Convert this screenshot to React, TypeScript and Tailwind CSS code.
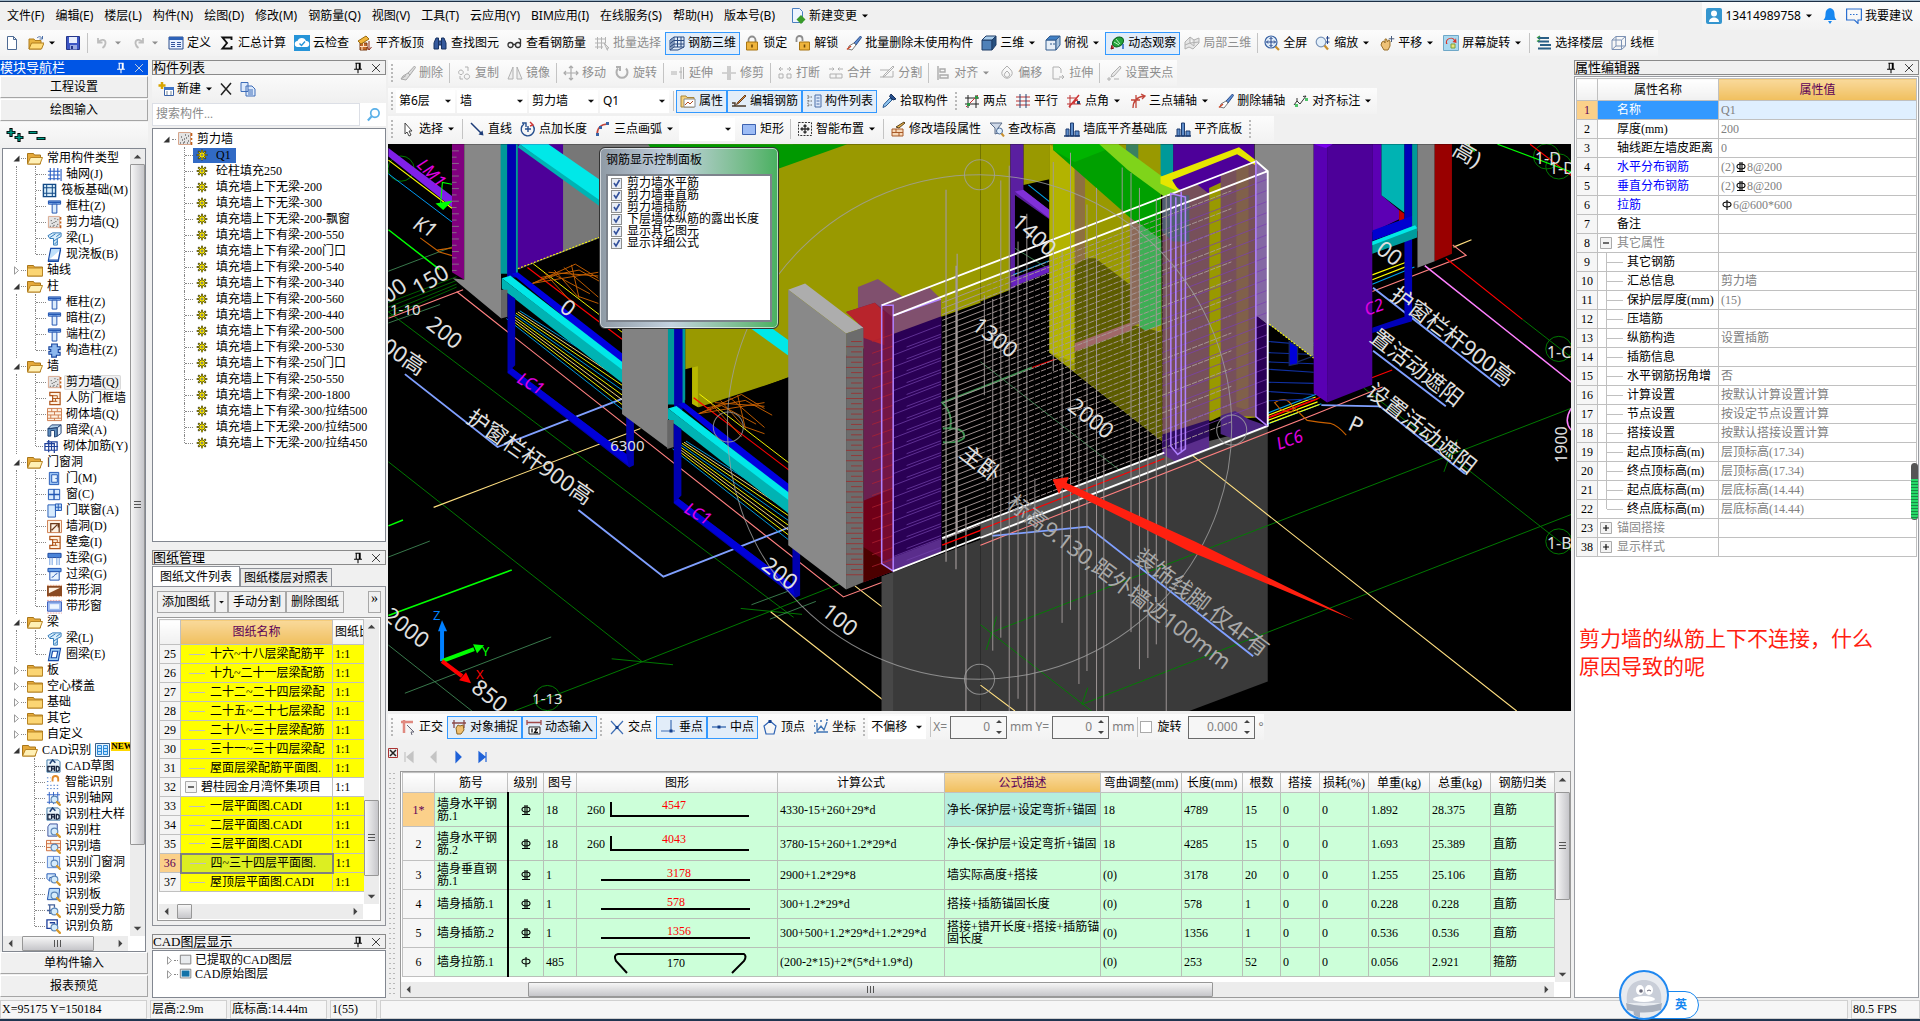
import type { ReactNode } from "react";
import clsx from "clsx";

/* ---------- icons, all on a 16 x 16 grid ---------- */

const lens = (
  <g>
    <circle cx="9" cy="9" r="3.6" fill="#d6ecfb" stroke="#5b86b8" strokeWidth="1.2" />
    <path d="M11.8 11.8l3 3" stroke="#d99a2b" strokeWidth="2.4" strokeLinecap="round" />
  </g>
);

const cadBadge = (
  <g>
    <path d="M1 1h12l2 2v11H1z" fill="#eaf4fb" stroke="#3b78a8" />
    <path d="M4 5l3-4 3 3" fill="none" stroke="#1d3f73" strokeWidth="1.6" />
    <path d="M5 8H2v5h3M6 13V8h3v5M6 10.5h3M11 8v5h1.5l1.5-1V9l-1.5-1z" fill="none" stroke="#14213d" strokeWidth="1.4" />
  </g>
);

const icons: Record<string, ReactNode> = {
  page: <path d="M3.5 1.5h6l3 3v10h-9z M9.5 1.5v3h3" fill="#fff" stroke="#4d6a94" />,
  open: (
    <g>
      <path d="M1 4h5l1 1.5h6V14H1z" fill="#e9b440" stroke="#b07d1c" />
      <path d="M3.5 8H16l-2.5 6H1z" fill="#ffdc7a" stroke="#b07d1c" />
      <path d="M9 3c2-2 4-1.5 5 .5M14.5 1v3h-3" fill="none" stroke="#4a6ea8" />
    </g>
  ),
  save: (
    <g>
      <path d="M1.5 1.5h13v13h-13z" fill="#3c55c4" stroke="#25368a" />
      <path d="M4 2h8v6H4z" fill="#e9eefc" />
      <path d="M5 10h7v4.5H5z" fill="#9aa9e2" />
      <path d="M6 11h2v3H6z" fill="#25368a" />
    </g>
  ),
  undo: <path d="M4 3v4.5h4.5M4.5 7C7 3.5 12 4.5 11.5 8.5 11.2 10.5 10 12 8.5 13" fill="none" stroke="#bdbdbd" strokeWidth="1.8" />,
  redo: <path d="M12 3v4.5H7.5M11.5 7C9 3.5 4 4.5 4.5 8.5 4.8 10.5 6 12 7.5 13" fill="none" stroke="#bdbdbd" strokeWidth="1.8" />,
  define: (
    <g>
      <path d="M1 2h14v12H1z" fill="#eaf2ff" stroke="#2b4c8c" />
      <path d="M1 2h14v3H1z" fill="#2e62b8" />
      <path d="M3 7.5h4M3 9.5h4M3 11.5h4M9 7.5h4M9 9.5h4M9 11.5h4" stroke="#33539b" />
    </g>
  ),
  sigma: <path d="M12.5 5V2.5h-9L8 8l-4.5 5.5h9V11" fill="none" stroke="#111" strokeWidth="1.9" />,
  cloud: (
    <g>
      <path d="M0 0h16v16H0z" fill="#2694d8" />
      <path d="M4 12a3 3 0 01-.5-6A4.5 4.5 0 0112 6a3 3 0 01.5 6z" fill="#fff" />
      <path d="M5.5 8.5l2 2 3.5-4" fill="none" stroke="#2694d8" strokeWidth="1.4" />
    </g>
  ),
  flush: (
    <g>
      <path d="M3 15V8h7v7z" fill="#c26a2c" stroke="#7a3d14" />
      <path d="M3 11.5h7M6.5 8v3.5M5 11.5V15" stroke="#ffe0c0" />
      <path d="M1 6l8-5 3 3-8 5z" fill="#f1b53a" stroke="#9a6a10" />
      <path d="M12 6v8M10 12l2 3 2.5-3" fill="none" stroke="#8b2a12" />
    </g>
  ),
  binoc: (
    <g fill="#35599c" stroke="#17305f">
      <path d="M2 14V8l2-5h2.5v11zM9.5 14V3H12l2 5v6z" />
      <path d="M6.5 6h3v4h-3z" />
    </g>
  ),
  glasses: (
    <g fill="none" stroke="#333" strokeWidth="1.3">
      <circle cx="3.5" cy="10" r="2.5" />
      <circle cx="11" cy="10" r="2.5" />
      <path d="M6 9.5h2.5M13.5 9V4.5l-2-1" />
    </g>
  ),
  batch: (
    <g fill="none" stroke="#b3b3b3">
      <path d="M1 4h11M1 8h11M1 12h8M3.5 2v12M7.5 2v12M11.5 2v6" />
      <path d="M10 8l5 5-2 .3.5 2z" fill="#eee" />
    </g>
  ),
  rebar3d: <path d="M1 5l4-3v10l-4 3zM5 2h10v10H5M8.5 2v10M12 2v10M1 8.5l4-3h10M1 12l4-3h10M1 15h8l6-3M3 3.5v10" fill="none" stroke="#28487e" />,
  lock: (
    <g>
      <path d="M4.5 8V5a3.5 3.5 0 017 0v3" fill="none" stroke="#8d8d8d" strokeWidth="1.8" />
      <path d="M2.5 7h11v8h-11z" fill="#efb43c" stroke="#a87513" />
      <path d="M8 9.5v3" stroke="#6b4708" strokeWidth="1.6" />
    </g>
  ),
  unlock: (
    <g>
      <path d="M1.5 7V4a3 3 0 016 0v2" fill="none" stroke="#8d8d8d" strokeWidth="1.8" />
      <path d="M4.5 7h10v8h-10z" fill="#efb43c" stroke="#a87513" />
      <path d="M9.5 9.5v3" stroke="#6b4708" strokeWidth="1.6" />
    </g>
  ),
  brush: (
    <g>
      <path d="M14.5 1L8 8l2 2 5.5-7.5z" fill="#5f8cd0" stroke="#2c4f8c" />
      <path d="M8 8l2 2-4 5-4-1 1-3z" fill="#fff" stroke="#777" />
      <path d="M1 14.5l4-3.5" stroke="#d04a2a" strokeWidth="1.5" />
    </g>
  ),
  brushOff: <path d="M14.5 1L8 8l2 2 5.5-7.5zM8 8l2 2-4 5-5-1 2-3zM1 14l5-3.5" fill="#ddd" stroke="#aaa" />,
  cube: (
    <g stroke="#1f3c66">
      <path d="M1 5h10v10H1z" fill="#4f81b8" />
      <path d="M1 5l4-4h10l-4 4z" fill="#a9cdec" />
      <path d="M11 5l4-4v9l-4 5z" fill="#27507f" />
    </g>
  ),
  topview: (
    <g stroke="#335c8e">
      <path d="M1 5h10v10H1z" fill="#e6eef7" />
      <path d="M1 5l4-4h10l-4 4z" fill="#3f7fc4" />
      <path d="M11 5l4-4v9l-4 5z" fill="#a8c2dc" />
      <path d="M5 9h6" strokeDasharray="2 1" />
    </g>
  ),
  orbit: (
    <g>
      <ellipse cx="9" cy="7" rx="6" ry="4.5" transform="rotate(-35 9 7)" fill="#23a33a" stroke="#0e5f1e" />
      <path d="M5 13l-3 1 1-4" fill="#c33" stroke="#7a1010" />
      <path d="M7 4l4 5M5 7l5 3" stroke="#bff0c4" />
      <path d="M14 9v5" stroke="#2560c0" strokeWidth="1.5" />
    </g>
  ),
  local3d: <path d="M1 7l5-5 4 3 5-2v5l-6 6-4-2-4 2zM6 2v6l4 3M10 5v6M1 10l5-2 9-1" fill="#e6e6e6" stroke="#b0b0b0" />,
  fullzoom: (
    <g>
      <circle cx="7" cy="7" r="6" fill="#e3effa" stroke="#3a63a4" strokeWidth="1.2" />
      <path d="M7 2.5v9M2.5 7h9M5.5 4L7 2.5 8.5 4M5.5 10L7 11.5 8.5 10M4 5.5L2.5 7 4 8.5M10 5.5L11.5 7 10 8.5" fill="none" stroke="#24458a" />
      <path d="M11.5 11.5l3.5 3.5" stroke="#c98f2c" strokeWidth="2.2" />
    </g>
  ),
  zoom: (
    <g>
      <circle cx="6" cy="7" r="4.8" fill="#e3effa" stroke="#7a94b8" strokeWidth="1.2" />
      <path d="M9.5 10.5l3.5 4" stroke="#c98f2c" strokeWidth="2.2" />
      <path d="M12.5 1v8M11 3h3.5M11 7h3.5" stroke="#24458a" />
    </g>
  ),
  hand: (
    <g>
      <path d="M3 7l2-1 1 2V4h1.5l1 3 1-2 1.5 1v5l-2 4H5L2 10z" fill="#eec277" stroke="#99702a" />
      <path d="M12.5 1v6M9.8 3.8h5.5" stroke="#4a5d7e" />
    </g>
  ),
  spin: (
    <g>
      <path d="M.5.5h15v15H.5z" fill="#a9d8ef" stroke="#6fa8c8" />
      <path d="M3 9a5 5 0 019-4l1-2 .5 5-4-1 1.5-1.5A3.5 3.5 0 004.5 9z" fill="#d8352a" />
      <path d="M8 9h4v4H8z" fill="#e9e27a" stroke="#7ca03a" />
    </g>
  ),
  floors: (
    <g>
      <path d="M2 3h11M2 6.5h11M2 13.5h13M4 10h11" stroke="#2a5f86" strokeWidth="1.8" />
      <path d="M1 3l3-2M1 6.5l3-2" stroke="#3a9b4a" strokeWidth="1.5" />
    </g>
  ),
  wire: <path d="M1 5h9.5v9.5H1zM5 1.5h9.5V11M1 5l4-3.5M10.5 5l4-3.5M10.5 14.5l4-3.5M5 1.5V11h9.5M1 14.5L5 11" fill="none" stroke="#7d92b4" />,
  copy: <path d="M5 5a2.3 2.3 0 11-.1 0zM11 9a2.6 2.6 0 11-.1 0zM9 2h3v4M4 11v3h3" fill="none" stroke="#b0b0b0" />,
  mirror: <path d="M6 2v12H1zM10 2v12h5z" fill="#eee" stroke="#b0b0b0" />,
  move: <path d="M8 1v14M1 8h14M6 3l2-2 2 2M6 13l2 2 2-2M3 6L1 8l2 2M13 6l2 2-2 2" fill="none" stroke="#aaa" strokeWidth="1.2" />,
  rotate: <path d="M4 3.5a5.5 5.5 0 108 0M2 2h4v4" fill="none" stroke="#b0b0b0" strokeWidth="2" />,
  extend: <path d="M1 7h6M1 9h6M9 7h3M13.5 2v12M11 2v12" stroke="#b0b0b0" />,
  trim: <path d="M1 8h5M10 8h5M7 1v14M9 1v14" stroke="#b0b0b0" strokeWidth="1.2" />,
  cut: <path d="M2 4h4M10 4h4M4 2L2 4l2 2M12 2l2 2-2 2M2 9h4v4H2zM10 9h4v4h-4z" fill="none" stroke="#b0b0b0" />,
  merge: <path d="M1 4h5M10 4h5M4.5 2.5L6 4 4.5 5.5M11.5 2.5L10 4l1.5 1.5M2 9h12v4H2zM8 9v4" fill="none" stroke="#b0b0b0" />,
  split: <path d="M1 5h9M1 12h13V6M14 1L5 10l-1 2 2-1 9-9z" fill="none" stroke="#b0b0b0" />,
  align: <path d="M3 1v14M5 4h5v3H5zM5 10h8v3H5z" fill="none" stroke="#aaa" strokeWidth="1.4" />,
  offset: <path d="M8 1l4 4a5 5 0 11-8 0zM8 6l2 2a2.6 2.6 0 11-4 0z" fill="none" stroke="#b0b0b0" />,
  stretch: <path d="M3 14V2h6l2 2v4M3 14h7M12 10l2 2-2 2M9 12h5" fill="none" stroke="#b0b0b0" />,
  grip: <path d="M1 14h4M3 12v4M8 14h5M14 1L6 9l-1 3 3-1 7-8z" fill="#e8e8e8" stroke="#b0b0b0" />,
  attr: (
    <g>
      <path d="M1 3h5l1 1.5h7V14H1z" fill="#f5d27c" stroke="#a8843a" />
      <path d="M4 6h11v8H4z" fill="#fff" stroke="#888" />
      <path d="M5 12l3-3 2 2 3-3" fill="none" stroke="#b04a20" />
    </g>
  ),
  editbar: (
    <g>
      <path d="M1 13h14M1 10h3v3" fill="none" stroke="#4a3a2a" strokeWidth="1.4" />
      <path d="M14 2L7 9l-1.5 2.5L8 10l7-7z" fill="#d98c3a" stroke="#6b4020" />
    </g>
  ),
  complist: (
    <g>
      <path d="M9 2h6v12H9z" fill="#dce8fa" stroke="#4a6ea8" />
      <path d="M10.5 5h3M10.5 8h3M10.5 11h3" stroke="#4a6ea8" />
      <path d="M2 2v12M2 4h4M2 8h4M2 12h4" stroke="#666" strokeDasharray="1.5 1" />
    </g>
  ),
  pick: (
    <g>
      <path d="M10 1l5 5-3 1-3.5-3.5z" fill="#27508f" stroke="#162f59" />
      <path d="M9 5l2 2-6 6-3 1.5.8-3z" fill="#8fc4ee" stroke="#2c5b92" />
    </g>
  ),
  twopt: (
    <g>
      <path d="M1 5h14M1 11h14M4 2v13M12 2v13" stroke="#222" />
      <path d="M2 14L14 2" stroke="#c33" />
      <path d="M3 10h3v3H3zM11 3h3v3h-3z" fill="#2c9440" />
    </g>
  ),
  parallel: (
    <g>
      <path d="M1 4h14M1 8h14M1 12h14" stroke="#b33" />
      <path d="M5 1v14M11 1v14" stroke="#247" />
    </g>
  ),
  ptangle: (
    <g>
      <path d="M1 5h9M1 11h14M4 2v13" stroke="#b33" />
      <path d="M3 14L13 2M8 11a4 4 0 014-4" fill="none" stroke="#c33" strokeWidth="1.5" />
      <path d="M11 8h3v3h-3z" fill="#246" />
    </g>
  ),
  threept: <path d="M3 15C3 8 7 4 14 3M1 7h9M6 2v13M11 1l4 2-3 3" fill="none" stroke="#c2453a" strokeWidth="1.3" />,
  dim: (
    <g>
      <path d="M1 12l3-4 3 3 6-8M4 5v3M13 3l-3 .5" fill="none" stroke="#333" />
      <path d="M2 11h3v3H2zM12 5h3v3h-3z" fill="#4fc46a" />
    </g>
  ),
  cursor: <path d="M5 2l7 8H9l2 4-2 1-2-4-2 2z" fill="#fff" stroke="#444" />,
  line: (
    <g>
      <path d="M2 2l11 11" stroke="#1d3c78" strokeWidth="1.5" />
      <path d="M14.5 14.5l-5-1 4-4z" fill="#1d3c78" />
    </g>
  ),
  ptlen: (
    <g fill="none" stroke="#27508f" strokeWidth="1.4">
      <path d="M4 3a6.5 6.5 0 109 1.5M2 2h4v4M8 5v6M5 8h6" />
      <path d="M10 1l3 3-3 1" stroke="#c33" />
    </g>
  ),
  arc: (
    <g>
      <path d="M2 14C2 7 6 3 13 3" fill="none" stroke="#c2453a" strokeWidth="1.6" />
      <path d="M1 12h3v3H1zM11 1h3v3h-3zM4 5h3v3H4z" fill="#3a63a4" />
    </g>
  ),
  rect: <path d="M1.5 3.5h13v10h-13z" fill="#9dbcf5" stroke="#3d62b0" />,
  smart: (
    <g fill="none" stroke="#333">
      <path d="M1.5 1.5h13v13h-13z" strokeDasharray="2 1.2" />
      <path d="M8 4v8M4 8h8M6.5 5.5L8 4l1.5 1.5M6.5 10.5L8 12l1.5-1.5M5.5 6.5L4 8l1.5 1.5M10.5 6.5L12 8l-1.5 1.5" strokeWidth="1.3" />
    </g>
  ),
  wallattr: (
    <g>
      <path d="M2 15V8h11v7z" fill="#f7d8b8" stroke="#a85a28" />
      <path d="M2 11.5h11M6 8v3.5M9 11.5V15" stroke="#a85a28" />
      <path d="M14 1L6 6l3 1 6-5z" fill="#e8b048" stroke="#5b4420" />
    </g>
  ),
  elev: (
    <g>
      <path d="M1 2h12L9 7v5l-3 1V7z" fill="#cfd9e8" stroke="#5a6c88" />
      <circle cx="10.5" cy="10" r="3" fill="#dff0ff" stroke="#4d6a94" />
      <path d="M12.5 12.5l2.5 3" stroke="#c98f2c" strokeWidth="2" />
    </g>
  ),
  footing: (
    <g>
      <path d="M2 15V8h3v7zM6.5 15V2h3v13zM11 15v-5h4v5z" fill="#5d8cc9" stroke="#1e3d70" />
      <path d="M0 15h16" stroke="#1e3d70" strokeWidth="1.5" />
    </g>
  ),
  newchange: (
    <g>
      <path d="M2.5.5h7l3 3v11h-10z" fill="#eef5ff" stroke="#4a7fc0" />
      <path d="M11 7l4.5 4.5L11 16l-4.5-4.5z" fill="#3a9b2a" />
    </g>
  ),
  user: (
    <g>
      <rect width="16" height="16" rx="2" fill="#3596cf" />
      <circle cx="8" cy="5.5" r="3" fill="#fff" />
      <path d="M3 14c0-6 10-6 10 0z" fill="#fff" />
    </g>
  ),
  bell: <path d="M8 0c3 .5 4.5 3 4.5 6 0 3 .5 4.5 2 6h-13c1.5-1.5 2-3 2-6C3.5 3 5 .5 8 0zM6 13h4l-2 3z" fill="#1787f0" />,
  chat: (
    <g fill="none" stroke="#2b6fd0" strokeWidth="1.2">
      <path d="M.6 1h14.8v11H12v3.5L8.5 12H.6z" />
      <path d="M4 6.5h8" strokeDasharray="1.5 1.5" />
    </g>
  ),
  ortho: (
    <g>
      <path d="M1 3h12M4 1v13" stroke="#e08a80" strokeWidth="2.5" />
      <path d="M7 6l7 7h-3l1 3" fill="#eee" stroke="#667" />
    </g>
  ),
  snap: (
    <g>
      <path d="M1 4h14M3 1v8M13 1v8" stroke="#8a4a4a" strokeWidth="1.3" />
      <path d="M5 9l2-3 2 1 3-1 1 5-3 4H6z" fill="#f0c070" stroke="#8c6420" />
    </g>
  ),
  dynin: (
    <g>
      <path d="M1 1v5M15 1v5M1 3.5h14" stroke="#a04a4a" strokeWidth="1.3" />
      <path d="M3 8h11v7H3z" fill="#fff" stroke="#222" />
      <path d="M6 9.5v4M8.5 10h2.5l-2.5 3.5H12" fill="none" stroke="#111" strokeWidth="1.3" />
    </g>
  ),
  cross: (
    <g>
      <path d="M2 2l12 13M14 2L2 15" stroke="#3f6fb5" strokeWidth="1.2" />
      <path d="M6.5 7h3v3h-3z" fill="#143f8c" />
    </g>
  ),
  perp: (
    <g>
      <path d="M1 12h14M11 1v11" stroke="#3f6fb5" strokeWidth="1.2" />
      <path d="M9.5 10.5h3v3h-3z" fill="#143f8c" />
    </g>
  ),
  mid: (
    <g>
      <path d="M1 8h14" stroke="#3f6fb5" strokeWidth="1.4" />
      <path d="M6.5 6.5h3v3h-3z" fill="#143f8c" />
    </g>
  ),
  vertex: (
    <g>
      <path d="M8 2l6 5-2 8H4L2 7z" fill="none" stroke="#2f64b5" strokeWidth="1.2" />
      <path d="M6.5 1h3v3h-3z" fill="#143f8c" />
    </g>
  ),
  coord: <path d="M4 4v9h11M4 12l4-5 3 4 3-8M1 2h2M7 2h2M13 1h2M1 7h1M1 14h2" fill="none" stroke="#3f74b5" strokeWidth="1.3" />,
  newcomp: (
    <g>
      <path d="M4 1v7M.5 4.5h7" stroke="#d7a400" strokeWidth="2.5" />
      <path d="M6.5 6.5h9v8h-9z" fill="#fff" stroke="#3a62a8" />
      <path d="M6 6h10v3H6z" fill="#3f74c8" />
      <path d="M8 11h2M12 11h2M8 13h2M12 13h2" stroke="#789" />
    </g>
  ),
  del: <path d="M3 2.5l10 11M13 2L3 14" stroke="#222" strokeWidth="1.5" />,
  copy2: (
    <g fill="#dce9fb" stroke="#3e6db8">
      <path d="M1 1.5h7v9H1zM6 5h6l3 3v7H6z" />
      <path d="M8 9h5M8 11h5M8 13h5" />
    </g>
  ),
  folder: (
    <g>
      <path d="M.5 3.5h6l1 1.5h8v9H.5z" fill="#e5a93a" stroke="#a8761a" />
      <path d="M.5 6h15v8H.5z" fill="#fbd573" stroke="#b98524" />
    </g>
  ),
  folderOpen: (
    <g>
      <path d="M.5 3.5h6l1 1.5h6V14H.5z" fill="#e5a93a" stroke="#a8761a" />
      <path d="M3.5 7.5h12L13 14H.5z" fill="#fff0b5" stroke="#b98524" />
    </g>
  ),
  axis: <path d="M3.5 1v13M7.5 1v13M11.5 1v13M1 4.5h13M1 8.5h13M1 12.5h13M15 2v13" stroke="#2c5fc4" strokeWidth="1.2" />,
  raft: (
    <g fill="none" stroke="#134a86" strokeWidth="1.5">
      <path d="M1.5 1.5h13v13h-13z" fill="#d6ecfa" />
      <path d="M5 5h6v6H5zM5 1.5V5M11 1.5V5M5 11v3.5M11 11v3.5M1.5 5H5M11 5h3.5M1.5 11H5M11 11h3.5" strokeWidth="1.1" />
    </g>
  ),
  column: (
    <g stroke="#1c4fae">
      <path d="M1.5 2h13v3.5h-13z" fill="#9cc6f5" />
      <path d="M5.5 5.5h5V15h-5z" fill="#dcecfc" />
      <path d="M1.5 3.5h13" strokeWidth="1.4" />
    </g>
  ),
  wall: (
    <g>
      <path d="M1.5 1.5h12v12h-12z" fill="#e4e4e4" stroke="#d7a68c" />
      <path d="M3 12h1M5 9h1M7 11h1M9 7h1M11 10h1M4 6h1M8 4h1M11 5h1M6 12h1M10 12h1M7 8h1" stroke="#333" />
      <path d="M14.5 2v3M14.5 7v2M14.5 11v3" stroke="#c0601c" strokeWidth="1.6" />
    </g>
  ),
  beam: (
    <g stroke="#2a75b8">
      <path d="M1 5l5-3h9v4l-4 2v7H7V8H3z" fill="#d9eefb" />
      <path d="M3 7l6-4M7 11l4-3M8 14l3-3M10 6l4-3" />
    </g>
  ),
  slab: <path d="M4 1.5h10.5L12 14H1.5z M1.5 14v1.5h10.5L14.5 3" fill="#bfe0fb" stroke="#174ba8" strokeWidth="1.2" />,
  gzz: <path d="M5 1h6v3h3v3h-2v3h2v3h-4v2H5v-3H2V9h2V7H2V4h3z" fill="#8db8ee" stroke="#1a459c" strokeWidth="1.2" />,
  ibrick: (
    <g>
      <path d="M3 1.5h11v13H3V11h3V5H3z" fill="#fff0de" stroke="#b0561c" strokeWidth="1.3" />
      <path d="M6 8h8M6 5h5M6 11h5M9 8v3M11 5v3" stroke="#b0561c" />
    </g>
  ),
  brick: (
    <g>
      <path d="M.5 1.5h15v13H.5z" fill="#fdf1e2" stroke="#cc7a4a" />
      <path d="M.5 5h15M.5 8.5h15M.5 12h15M5 1.5V5M11 1.5V5M8 5v3.5M4 8.5V12M12 8.5V12M8 12v2.5" stroke="#cc7a4a" />
    </g>
  ),
  darkbeam: (
    <g stroke="#1f3f70">
      <path d="M1 6l4-4h10l-4 3z" fill="#b5d3ec" />
      <path d="M1 6h3l7-1v9l-3 1V8H4v6H1z" fill="#5f8fc0" />
      <path d="M11 5l4-3v9l-4 3z" fill="#e3eefa" />
    </g>
  ),
  mesh: <path d="M3 3h11v9H1V5h10v10M5 1v13M8 3v9M1 8h14" fill="none" stroke="#1d3f9a" strokeWidth="1.3" />,
  door: (
    <g stroke="#2158b4">
      <path d="M2.5 1.5h10v13h-10z" fill="#9cc4f5" />
      <path d="M5 4h6v8H5z" fill="#e6f2fe" />
      <path d="M9 8h1.5" />
    </g>
  ),
  window: (
    <g stroke="#2158b4">
      <path d="M1.5 2.5h12v11h-12z" fill="#d7ebfe" />
      <path d="M7.5 2.5v11M1.5 8h12" strokeWidth="1.5" />
    </g>
  ),
  doorwin: (
    <g stroke="#2158b4">
      <path d="M1 2h8v13H1z" fill="#d7ebfe" />
      <path d="M9 1h6.5v7H9zM12 1v7M9 4.5h6.5" fill="#bcdaf8" />
    </g>
  ),
  hole: (
    <g>
      <path d="M.5 1.5h15v13H.5z" fill="#fdf1e2" stroke="#cc7a4a" />
      <path d="M4 14V5h9v9M5 12l6-6M8 5h4v4" fill="none" stroke="#6b3a1a" strokeWidth="1.3" />
    </g>
  ),
  link: (
    <g>
      <path d="M1 2.5h14V7H1z" fill="#4b84d8" stroke="#1a459c" />
      <path d="M3 7v8M5.5 7v8M10.5 7v8M13 7v8" stroke="#6a9ade" />
    </g>
  ),
  lintel: (
    <g stroke="#1c4fae">
      <path d="M1 1.5h14V5H1z" fill="#6aa2e8" />
      <path d="M3 5h10v9H3z" fill="#e8f3fe" />
      <path d="M5 11c3 0 3-4 6-4" fill="none" />
    </g>
  ),
  striphole: (
    <g>
      <path d="M0 3h16v11H0z" fill="#8a4a22" />
      <path d="M2 5h12L2 11z" fill="#fff2e2" />
      <path d="M0 2.5h16M0 14.5h16" stroke="#e7a27a" strokeDasharray="2 1" />
    </g>
  ),
  stripwin: (
    <g>
      <path d="M.5 3h15v10H.5z" fill="#9bb8f0" stroke="#3458b8" />
      <path d="M3 5.5h10v5H3z" fill="#eef5ff" />
      <path d="M0 1.5h16M0 15h16" stroke="#e7a2a2" strokeDasharray="2 1" />
    </g>
  ),
  ring: <path d="M4 1.5h10.5L12 14.5H1.5zM6 4.5h5.5L10 11.5H4.5z" fill="#9fd0f7" fillRule="evenodd" stroke="#174ba8" strokeWidth="1.2" />,
  cad: cadBadge,
  magnet: (
    <g>
      <path d="M7 7V4a3 3 0 016 0v3" fill="none" stroke="#e08a2a" strokeWidth="2" />
      <path d="M1 3h4M1 7h4M1 11h14M1 14.5h14" stroke="#3f74c8" strokeDasharray="1.5 2" />
    </g>
  ),
  fAxis: <g><path d="M3.5 1v13M8 1v13M12.5 1v13M1 4h14M1 12h14" stroke="#2c5fc4" />{lens}</g>,
  fCol: <g><path d="M4 1h8v13H2V4z" fill="#d7ebfe" stroke="#3a4f9a" />{lens}</g>,
  fWall: <g><path d="M.5 1.5h15v11H.5zM.5 5h15M.5 9h15M5 1.5V5M10 5v4" fill="#fdf1e2" stroke="#cc6a3a" />{lens}</g>,
  fDoor: <g><path d="M1.5 1.5h13v12h-13zM8 1.5v12" fill="#d7ebfe" stroke="#5a84d0" />{lens}</g>,
  fBeam: <g><path d="M1 3h9v4H4v4L1 8z" fill="#d7ebfe" stroke="#2158b4" />{lens}</g>,
  fSlab: <g><path d="M3.5 1.5h11l-1 12h-12z" fill="#bfe0fb" stroke="#174ba8" />{lens}</g>,
  fBar: <g><path d="M2 2h7v3M1 8h5M4 2v9h6" fill="none" stroke="#44619a" strokeWidth="1.4" />{lens}</g>,
  fNeg: <g><path d="M1 1h11v9H1zM4 4h5v6" fill="none" stroke="#1d3f9a" strokeWidth="1.4" />{lens}</g>,
  gear: (
    <g>
      <path d="M8 1v14M1 8h14M3 3l10 10M13 3L3 13" stroke="#111" strokeWidth="2.6" />
      <path d="M8 1.5v13M1.5 8h13M3.5 3.5l9 9M12.5 3.5l-9 9" stroke="#f4e400" strokeWidth="1.6" />
      <circle cx="8" cy="8" r="4" fill="#ffee00" stroke="#333" strokeWidth=".8" />
      <circle cx="8" cy="8" r="1.3" fill="#fff" stroke="#222" strokeWidth=".8" />
    </g>
  ),
  search: (
    <g fill="none" stroke="#5ab0e8">
      <circle cx="9.5" cy="6.5" r="4.5" strokeWidth="1.8" />
      <path d="M6 10l-4 4.5" strokeWidth="2.4" />
    </g>
  ),
  layerOff: <path d="M1.5 2.5h12v10h-12z" fill="#e8ebee" stroke="#777" />,
  layerOn: (
    <g>
      <path d="M1.5 2.5h12v10h-12z" fill="#fff" stroke="#777" />
      <path d="M3 4h9v7H3z" fill="#1373a8" />
    </g>
  ),
  pin: <path d="M5 2.5h6M6 2.5V9M9.5 2.5V9M10.5 2.5V9M3.5 9.5h9M8 9.5V14" fill="none" stroke="#000" strokeWidth="1.2" />,
  close: <path d="M3.5 3.5l9 9M12.5 3.5l-9 9" stroke="#222" />,
  caret: <path d="M4.5 6.5h7L8 10z" fill="#111" />,
};

const Icon = ({ name, className = "size-4" }: { name: string; className?: string }) => (
  <svg viewBox="0 0 16 16" className={clsx("shrink-0", className)} aria-hidden="true">
    {icons[name]}
  </svg>
);

/* ---------- toolbars ---------- */

type ToolItem = {
  icon?: string;
  label?: string;
  active?: boolean;
  off?: boolean;
  caret?: boolean;
  sep?: boolean;
};

const Caret = () => (
  <svg viewBox="0 0 10 16" className="h-4 w-[10px] shrink-0" aria-hidden="true">
    <path d="M2 6.5h6L5 9.5z" fill="currentColor" />
  </svg>
);
const Sep = () => <span className="mx-[2px] h-5 w-px shrink-0 bg-[#c4c4c4]" />;
const Grip = () => <span className="mx-[3px] h-[18px] w-0 shrink-0 border-l-2 border-dotted border-[#b9b9b9]" />;

const Tool = ({ icon, label, active, off, caret }: ToolItem) => (
  <button
    type="button"
    disabled={off}
    aria-label={label ? undefined : icon}
    className={clsx(
      "flex h-[23px] shrink-0 items-center gap-[3px] whitespace-nowrap border px-[3px]",
      active ? "border-[#3399ff] bg-[#e2edf9]" : "border-transparent",
      off ? "text-[#8e8e8e]" : "text-black"
    )}
  >
    {icon && <Icon name={icon} />}
    {label && <span>{label}</span>}
    {caret && <Caret />}
  </button>
);

const Tools = ({ items }: { items: ToolItem[] }) => (
  <>{items.map((t, i) => (t.sep ? <Sep key={i} /> : <Tool key={i} {...t} />))}</>
);

const Strip = ({ children }: { children: ReactNode }) => (
  <div className="flex h-[26px] shrink-0 items-center bg-gradient-to-b from-[#fcfcfc] to-[#f2f2f2]">{children}</div>
);

const menus = [
  "文件(F)", "编辑(E)", "楼层(L)", "构件(N)", "绘图(D)", "修改(M)", "钢筋量(Q)", "视图(V)",
  "工具(T)", "云应用(Y)", "BIM应用(I)", "在线服务(S)", "帮助(H)", "版本号(B)",
];

const mainTools: ToolItem[] = [
  { icon: "define", label: "定义" },
  { icon: "sigma", label: "汇总计算" },
  { icon: "cloud", label: "云检查" },
  { icon: "flush", label: "平齐板顶" },
  { icon: "binoc", label: "查找图元" },
  { icon: "glasses", label: "查看钢筋量" },
  { icon: "batch", label: "批量选择", off: true },
  { icon: "rebar3d", label: "钢筋三维", active: true },
  { icon: "lock", label: "锁定" },
  { icon: "unlock", label: "解锁" },
  { icon: "brush", label: "批量删除未使用构件" },
];

const viewTools: ToolItem[] = [
  { icon: "cube", label: "三维", caret: true },
  { icon: "topview", label: "俯视", caret: true },
  { icon: "orbit", label: "动态观察", active: true },
  { icon: "local3d", label: "局部三维", off: true },
  { sep: true },
  { icon: "fullzoom", label: "全屏" },
  { icon: "zoom", label: "缩放", caret: true },
  { icon: "hand", label: "平移", caret: true },
  { icon: "spin", label: "屏幕旋转", caret: true },
  { sep: true },
  { icon: "floors", label: "选择楼层" },
  { icon: "wire", label: "线框" },
];

const editTools: ToolItem[] = [
  { icon: "brushOff", label: "删除", off: true },
  { sep: true },
  { icon: "copy", label: "复制", off: true },
  { icon: "mirror", label: "镜像", off: true },
  { sep: true },
  { icon: "move", label: "移动", off: true },
  { icon: "rotate", label: "旋转", off: true },
  { sep: true },
  { icon: "extend", label: "延伸", off: true },
  { icon: "trim", label: "修剪", off: true },
  { sep: true },
  { icon: "cut", label: "打断", off: true },
  { icon: "merge", label: "合并", off: true },
  { icon: "split", label: "分割", off: true },
  { sep: true },
  { icon: "align", label: "对齐", off: true, caret: true },
  { icon: "offset", label: "偏移", off: true },
  { icon: "stretch", label: "拉伸", off: true },
  { sep: true },
  { icon: "grip", label: "设置夹点", off: true },
];

const compTools: ToolItem[] = [
  { icon: "attr", label: "属性", active: true },
  { icon: "editbar", label: "编辑钢筋", active: true },
  { icon: "complist", label: "构件列表", active: true },
  { icon: "pick", label: "拾取构件" },
];

const axisTools: ToolItem[] = [
  { icon: "twopt", label: "两点" },
  { icon: "parallel", label: "平行" },
  { icon: "ptangle", label: "点角", caret: true },
  { icon: "threept", label: "三点辅轴", caret: true },
  { icon: "brush", label: "删除辅轴" },
  { icon: "dim", label: "对齐标注", caret: true },
];

const drawTools: ToolItem[] = [
  { icon: "cursor", label: "选择", caret: true },
  { sep: true },
  { icon: "line", label: "直线" },
  { icon: "ptlen", label: "点加长度" },
  { icon: "arc", label: "三点画弧", caret: true },
];

const drawTools2: ToolItem[] = [
  { icon: "rect", label: "矩形" },
  { sep: true },
  { icon: "smart", label: "智能布置", caret: true },
  { sep: true },
  { icon: "wallattr", label: "修改墙段属性" },
  { icon: "elev", label: "查改标高" },
  { icon: "footing", label: "墙底平齐基础底" },
  { icon: "footing", label: "平齐底板" },
];

const Combo = ({ value, name, className }: { value: string; name: string; className: string }) => (
  <div className={clsx("relative mr-[2px] h-[23px] shrink-0 bg-white", className)}>
    <select aria-label={name} className="h-full w-full appearance-none bg-transparent px-[3px] outline-none">
      <option>{value}</option>
    </select>
    <Icon name="caret" className="pointer-events-none absolute right-0 top-1 size-[14px]" />
  </div>
);

/* ---------- shared bits ---------- */

const DockTitle = ({ title, blue }: { title: string; blue?: boolean }) => (
  <div
    className={clsx(
      "flex h-[15px] shrink-0 items-center overflow-hidden text-[13px] leading-[15px]",
      blue ? "bg-[#0055e5] text-white" : "border border-[#8a8a8a] bg-[#f0f0f0]"
    )}
  >
    <h2 className="flex-1">{title}</h2>
    <button type="button" aria-label="固定" className={clsx("mr-1", blue && "invert")}>
      <Icon name="pin" className="size-[14px]" />
    </button>
    <button type="button" aria-label="关闭" className={clsx("mr-[2px]", blue && "invert")}>
      <Icon name="close" className="size-[14px]" />
    </button>
  </div>
);

const Tri = ({ dir }: { dir: "up" | "down" | "left" | "right" }) => (
  <svg viewBox="0 0 16 16" className="size-[15px] shrink-0" aria-hidden="true">
    <path fill="#444" d={{ up: "M8 6l4 4H4z", down: "M8 10l4-4H4z", left: "M6 8l4-4v8z", right: "M10 8L6 4v8z" }[dir]} />
  </svg>
);

const VBar = ({ thumb }: { thumb: string }) => (
  <div className="flex w-[15px] shrink-0 flex-col bg-[#ececec]">
    <Tri dir="up" />
    <div className="min-h-0 flex-1">
      <div className={clsx("flex items-center justify-center rounded-[1px] border border-[#979797] bg-gradient-to-r from-[#f6f6f6] to-[#c6c6ca]", thumb)}>
        <span className="h-[8px] w-[7px] bg-[repeating-linear-gradient(to_bottom,#555_0_1px,transparent_1px_3px)]" />
      </div>
    </div>
    <Tri dir="down" />
  </div>
);

const HBar = ({ thumb, grips = true }: { thumb: string; grips?: boolean }) => (
  <div className="flex h-[15px] shrink-0 items-center bg-[#ececec]">
    <Tri dir="left" />
    <div className="h-full min-w-0 flex-1">
      <div className={clsx("flex h-full items-center justify-center rounded-[1px] border border-[#979797] bg-gradient-to-b from-[#f6f6f6] to-[#c6c6ca]", thumb)}>
        {grips && <span className="h-[7px] w-[8px] bg-[repeating-linear-gradient(to_right,#555_0_1px,transparent_1px_3px)]" />}
      </div>
    </div>
    <Tri dir="right" />
  </div>
);

const Expander = ({ open }: { open: boolean }) => (
  <svg viewBox="0 0 9 9" className="size-[9px] shrink-0" aria-hidden="true">
    {open ? <path d="M7.5 1.5v6h-6z" fill="#333" /> : <path d="M2.5.8v7.4L6.5 4.5z" fill="#fff" stroke="#999" />}
  </svg>
);

const PlusMinus = ({ plus }: { plus?: boolean }) => (
  <svg viewBox="0 0 12 12" className="size-3 shrink-0" aria-hidden="true">
    <path d="M.5.5h11v11H.5z" fill="#f4f4f4" stroke="#aaa" />
    <path d={plus ? "M3 6h6M6 3v6" : "M3 6h6"} stroke="#111" strokeWidth="1.2" />
  </svg>
);

/* steel grade marks: HPB is a barred circle, HRB has the extra foot */
const Grade = ({ hrb }: { hrb?: boolean }) => (
  <svg viewBox="0 0 10 10" className="mx-px inline-block size-[10px] align-[-1px]" role="img" aria-label={hrb ? "HRB400" : "HPB300"}>
    <ellipse cx="5" cy="4.5" rx="4" ry="2.5" fill="none" stroke="#000" strokeWidth="1.1" />
    <path d={hrb ? "M4 0v9M6 0v9M1 9.5h8" : "M5 0v10"} stroke="#000" strokeWidth="1.1" />
  </svg>
);

/* ---------- left navigation ---------- */

type Group = { name: string; open: boolean; items: [string, string][] };

const nav: Group[] = [
  {
    name: "常用构件类型", open: true,
    items: [["axis", "轴网(J)"], ["raft", "筏板基础(M)"], ["column", "框柱(Z)"], ["wall", "剪力墙(Q)"], ["beam", "梁(L)"], ["slab", "现浇板(B)"]],
  },
  { name: "轴线", open: false, items: [] },
  { name: "柱", open: true, items: [["column", "框柱(Z)"], ["column", "暗柱(Z)"], ["column", "端柱(Z)"], ["gzz", "构造柱(Z)"]] },
  {
    name: "墙", open: true,
    items: [["wall", "剪力墙(Q)"], ["ibrick", "人防门框墙"], ["brick", "砌体墙(Q)"], ["darkbeam", "暗梁(A)"], ["mesh", "砌体加筋(Y)"]],
  },
  {
    name: "门窗洞", open: true,
    items: [
      ["door", "门(M)"], ["window", "窗(C)"], ["doorwin", "门联窗(A)"], ["hole", "墙洞(D)"], ["ibrick", "壁龛(I)"],
      ["link", "连梁(G)"], ["lintel", "过梁(G)"], ["striphole", "带形洞"], ["stripwin", "带形窗"],
    ],
  },
  { name: "梁", open: true, items: [["beam", "梁(L)"], ["ring", "圈梁(E)"]] },
  { name: "板", open: false, items: [] },
  { name: "空心楼盖", open: false, items: [] },
  { name: "基础", open: false, items: [] },
  { name: "其它", open: false, items: [] },
  { name: "自定义", open: false, items: [] },
  {
    name: "CAD识别", open: true,
    items: [
      ["cad", "CAD草图"], ["magnet", "智能识别"], ["fAxis", "识别轴网"], ["cad", "识别柱大样"], ["fCol", "识别柱"], ["fWall", "识别墙"],
      ["fDoor", "识别门窗洞"], ["fBeam", "识别梁"], ["fSlab", "识别板"], ["fBar", "识别受力筋"], ["fNeg", "识别负筋"],
    ],
  },
];

const NavButton = ({ children }: { children: string }) => (
  <button type="button" className="mb-px h-[22px] w-full shrink-0 border border-[#a5a5a5] border-l-white border-t-white bg-[#f0f0f0] text-center leading-5">
    {children}
  </button>
);

const ModuleNav = () => (
  <aside className="flex w-[148px] shrink-0 flex-col">
    <DockTitle title="模块导航栏" blue />
    <div className="pt-px">
      <NavButton>工程设置</NavButton>
      <NavButton>绘图输入</NavButton>
    </div>
    <div className="flex h-[26px] shrink-0 items-center gap-1 bg-gradient-to-b from-[#fafafa] to-[#f0f0f0] pl-[6px]">
      <svg viewBox="0 0 18 16" className="h-4 w-[18px]" aria-hidden="true">
        <path d="M5 1v9M.5 5.500h9M13 6v9M8.500 10.500h9" stroke="#000" strokeWidth="3.2" />
        <path d="M5 2v7M1.500 5.500h7M13 7v7M9.500 10.500h7" stroke="#00a08a" strokeWidth="1.4" />
      </svg>
      <svg viewBox="0 0 18 16" className="h-4 w-[18px]" aria-hidden="true">
        <path d="M.5 5.500h9M8.500 11.500h9" stroke="#000" strokeWidth="3.2" />
        <path d="M1.500 5.500h7M9.500 11.500h7" stroke="#00a08a" strokeWidth="1.4" />
      </svg>
    </div>
    <div className="mx-[2px] flex min-h-0 flex-1 flex-col border border-[#828790] bg-white">
      <div className="flex min-h-0 flex-1">
        <ul className="min-w-0 flex-1 overflow-hidden whitespace-nowrap pl-[9px] pt-px">
          {nav.map((g) => (
            <li key={g.name}>
              <div className="flex h-4 items-center">
                <Expander open={g.open} />
                <span className="mr-px w-[5px] border-t border-dotted border-[#888]" />
                <Icon name={g.open ? "folderOpen" : "folder"} />
                <span className="ml-[4px]">{g.name}</span>
                {g.name === "CAD识别" && (
                  <span className="flex items-start">
                    <svg viewBox="0 0 16 16" className="ml-1 size-4" aria-hidden="true">
                      <path d="M.5 1.5h14v13H.5z" fill="#e8f4ff" stroke="#3a5f88" />
                      <path d="M2.5 3.5h4v9h-4zM8.5 3.5h4v9h-4zM2.5 6.5h4M8.5 6.5h4M2.5 9.5h4M8.5 9.5h4" fill="#bfe3ff" stroke="#2b8ad8" />
                    </svg>
                    <span className="bg-[#ffd800] text-[9px] font-bold leading-[9px]">NEW</span>
                  </span>
                )}
              </div>
              {g.items.length > 0 && (
                <ul className={clsx("ml-1", g.name !== "CAD识别" && "border-l border-dotted border-[#888]")}>
                  {g.items.map(([icon, label], i) => (
                    <li key={label} className="flex h-4 items-center pl-[18px]">
                      <span className={clsx("w-px self-stretch border-l border-dotted border-[#888]", i === g.items.length - 1 && "mb-2")} />
                      <span className="mr-px w-[10px] border-t border-dotted border-[#888]" />
                      <Icon name={icon} className="size-[15px]" />
                      <span
                        className={clsx(
                          "ml-[2px] px-[2px] leading-[15px]",
                          g.name === "墙" && i === 0 && "rounded-[2px] bg-[#f0f0f0] ring-1 ring-inset ring-[#dadada]"
                        )}
                      >
                        {label}
                      </span>
                    </li>
                  ))}
                </ul>
              )}
            </li>
          ))}
        </ul>
        <VBar thumb="h-[90%]" />
      </div>
      <div className="flex">
        <div className="flex-1">
          <HBar thumb="ml-1 w-[72px]" />
        </div>
        <div className="w-[17px]" />
      </div>
    </div>
    <NavButton>单构件输入</NavButton>
    <NavButton>报表预览</NavButton>
  </aside>
);

/* ---------- component list and drawings ---------- */

const comps = [
  "Q1", "砼柱填充250", "填充墙上下无梁-200", "填充墙上下无梁-300", "填充墙上下无梁-200-飘窗", "填充墙上下有梁-200-550",
  "填充墙上下有梁-200门口", "填充墙上下有梁-200-540", "填充墙上下有梁-200-340", "填充墙上下有梁-200-560",
  "填充墙上下有梁-200-440", "填充墙上下有梁-200-500", "填充墙上下有梁-200-530", "填充墙上下有梁-250门口",
  "填充墙上下有梁-250-550", "填充墙上下有梁-200-1800", "填充墙上下有梁-300/拉结500", "填充墙上下无梁-200/拉结500",
  "填充墙上下无梁-200/拉结450",
];

const drawings: [number, string][] = [
  [25, "十六~十八层梁配筋平"], [26, "十九~二十一层梁配筋"], [27, "二十二~二十四层梁配"], [28, "二十五~二十七层梁配"],
  [29, "二十八~三十层梁配筋"], [30, "三十一~三十四层梁配"], [31, "屋面层梁配筋平面图."], [32, "碧桂园金月湾怀集项目"],
  [33, "一层平面图.CADI"], [34, "二层平面图.CADI"], [35, "三层平面图.CADI"], [36, "四~三十四层平面图."], [37, "屋顶层平面图.CADI"],
];

const flatBtn = "h-[22px] shrink-0 border border-[#a8a8a8] bg-[#f0f0f0] px-1 leading-5";
const headCell = "border border-[#c0c0c0] bg-gradient-to-b from-white to-[#f0f0f0] p-0 font-normal";
const headHot = "border border-[#c0c0c0] bg-gradient-to-b from-[#f9d99a] to-[#f0bf5c] p-0 font-normal text-[#5c0058]";

const ListColumn = () => (
  <aside className="ml-1 flex w-[234px] shrink-0 flex-col">
    <DockTitle title="构件列表" />
    <div className="flex h-[28px] shrink-0 items-center bg-gradient-to-b from-[#fafafa] to-[#f0f0f0] pl-[2px] [font-family:'Noto_Sans','Noto_Sans_CJK_SC',sans-serif]">
      <Tool icon="newcomp" label="新建" caret />
      <Icon name="del" />
      <button type="button" aria-label="复制" className="ml-[6px]">
        <Icon name="copy2" />
      </button>
    </div>
    <div className="mb-[2px] flex h-[23px] shrink-0 items-center">
      <input
        type="text"
        aria-label="搜索构件"
        placeholder="搜索构件..."
        className="h-full w-[208px] border border-[#dcdfe6] bg-white px-[3px] placeholder:text-[#8a8a8a]"
      />
      <button type="button" aria-label="搜索" className="flex h-full flex-1 items-center justify-center bg-white">
        <Icon name="search" className="size-[15px]" />
      </button>
    </div>
    <div className="min-h-0 flex-1 overflow-hidden border border-[#828790] bg-white pl-[9px] pt-[2px]">
      <div className="flex h-4 items-center">
        <Expander open />
        <span className="mx-px w-[4px] border-t border-dotted border-[#888]" />
        <Icon name="wall" />
        <span className="ml-1">剪力墙</span>
      </div>
      <ul className="pl-[22px]">
        {comps.map((c, i) => (
          <li key={c} className="flex h-4 items-center whitespace-nowrap">
            <span className={clsx("w-px self-stretch border-l border-dotted border-[#888]", i === comps.length - 1 && "mb-2")} />
            <span className="w-2 border-t border-dotted border-[#888]" />
            <span className={clsx("flex h-[15px] items-center pl-[3px] pr-[5px]", i === 0 && "bg-[#316ac5]")}>
              <Icon name="gear" className="size-3" />
              <span className="ml-2">{c}</span>
            </span>
          </li>
        ))}
      </ul>
    </div>

    <div className="mt-2 shrink-0">
      <DockTitle title="图纸管理" />
      <div role="tablist" className="mt-px flex items-end">
        <button type="button" role="tab" aria-selected="true" className="h-5 w-[88px] border border-b-0 border-[#8f9299] bg-white">
          图纸文件列表
        </button>
        <button type="button" role="tab" aria-selected="false" className="h-[18px] w-[92px] border border-b-0 border-[#8f9299] bg-[#eaeaea]">
          图纸楼层对照表
        </button>
      </div>
      <div className="border border-[#8f9299] p-1">
        <div className="mb-1 flex">
          <button type="button" className={flatBtn}>添加图纸</button>
          <button type="button" aria-label="更多添加方式" className="h-[22px] w-[13px] border border-[#a8a8a8]">
            <Icon name="caret" className="h-4 w-[11px]" />
          </button>
          <button type="button" className={flatBtn}>手动分割</button>
          <button type="button" className={flatBtn}>删除图纸</button>
          <button type="button" className="ml-auto h-[22px] w-[13px] border border-[#a8a8a8] pb-2 text-[14px] leading-none">»</button>
        </div>
        <div className="border border-[#9a9a9a] bg-white p-px">
          <div className="flex h-[285px]">
            <div className="min-w-0 flex-1 overflow-hidden">
              <table className="w-full table-fixed border-collapse">
                <colgroup>
                  <col className="w-[21px]" />
                  <col />
                  <col className="w-[31px]" />
                </colgroup>
                <thead>
                  <tr className="h-[25px]">
                    <th className={headCell} aria-label="序号" />
                    <th className={headHot}>图纸名称</th>
                    <th className={clsx(headCell, "overflow-hidden whitespace-nowrap pl-[2px] text-left")}>图纸比例</th>
                  </tr>
                </thead>
                <tbody>
                  {drawings.map(([n, name]) => {
                    const root = n === 32;
                    const sel = n === 36;
                    return (
                      <tr key={n} className="h-[19px] leading-4">
                        <td className={clsx("border border-[#c0c0c0] p-0 text-center", sel ? "bg-[#fbd08a] text-[#5c0058]" : "bg-[#f4f4f4]")}>{n}</td>
                        <td
                          className={clsx(
                            "overflow-hidden whitespace-nowrap p-0",
                            sel ? "border-2 border-[#808080] bg-[#dcee22]" : "border border-[#c0c0c0]",
                            !sel && (root ? "bg-white" : "bg-[#ffff00]")
                          )}
                        >
                          <span className="flex items-center">
                            {root ? (
                              <span className="mx-1 flex">
                                <PlusMinus />
                              </span>
                            ) : (
                              <span className="ml-2 mr-[5px] w-4 border-t border-[#c0c0c0]" />
                            )}
                            {name}
                          </span>
                        </td>
                        <td className={clsx("border border-r-0 border-[#c0c0c0] p-0 pl-[2px]", root ? "bg-white" : "bg-[#ffff00]")}>1:1</td>
                      </tr>
                    );
                  })}
                </tbody>
              </table>
            </div>
            <VBar thumb="mt-[166px] h-[76px]" />
          </div>
          <div className="pr-4">
            <HBar thumb="ml-[3px] w-[15px]" grips={false} />
          </div>
        </div>
      </div>
    </div>

    <div className="mt-2 shrink-0">
      <DockTitle title="CAD图层显示" />
      <ul className="mt-px h-[48px] border border-[#828790] bg-white pl-3 pt-[2px]">
        {[["layerOff", "已提取的CAD图层"], ["layerOn", "CAD原始图层"]].map(([icon, label]) => (
          <li key={label} className="flex h-[14px] items-center">
            <Expander open={false} />
            <span className="mr-px w-1 border-t border-dotted border-[#888]" />
            <Icon name={icon} className="size-[14px]" />
            <span className="ml-[2px]">{label}</span>
          </li>
        ))}
      </ul>
    </div>
  </aside>
);

/* ---------- 3D view ---------- */

// the model is drafted in two halves, each on its own 1568-unit sheet
const WEST = "translate(-8 -4) scale(.38265 .3699)";
const EAST = "translate(592 -4) scale(.38265 .3699)";

const steps = (n: number) => Array.from({ length: n }, (_, i) => i);

const BayWindow = ({ dx = 0, dy = 0 }: { dx?: number; dy?: number }) => (
  <g transform={`translate(${dx} ${dy})`}>
    {["#00a0e8", "#ffff00", "#ffdf80", "#ffff00", "#00a0e8", "#ffff00", "#ffdf80", "#00a0e8"].map((c, i) => (
      <path key={i} d={`M${330 + i * 5} ${483 - i * 3}L632 ${728 - i * 13}`} stroke={c} strokeWidth="2.5" />
    ))}
    <path d="M362 350l270 160v70L362 362z" fill="#000" />
    <path d="M385 345L640 545" stroke="#f00" strokeWidth="3" />
    <path d="M400 335L635 522" stroke="#ff0" strokeWidth="2.5" />
    <path
      d="M398 388l112-52 60 38M398 388l60-22 90 50M430 360l80 90M455 352l60 70 55 20M480 345l90 80M500 338l20 90M398 388l172-30M420 372l100-20 70 40M440 358l130 10"
      fill="none"
      stroke="#c86000"
      strokeWidth="2.5"
    />
    <path d="M344 362l16-4 276 222v32z" fill="#0000e0" />
    <path d="M318 374l22-7 296 236v26z" fill="#00e8e8" />
    <path d="M318 374l318 250v36L318 402z" fill="#00b3b3" />
    <path d="M316 405h17v73l-17 5z" fill="#666" />
    <path d="M333 415l20 14v180l-8 8 298 232v-105h20v135l-12 6-318-255z" fill="#0000b0" />
    <path d="M345 617l298 232 6 30-316-252z" fill="#0000d8" />
  </g>
);

const Model = () => (
  <svg viewBox="0 0 1182 567" preserveAspectRatio="xMidYMid slice" className="absolute inset-0 h-full w-full" role="img" aria-label="钢筋三维">
    <rect width="1182" height="567" fill="#000" />

    <g transform={WEST} fill="none">
      <g stroke="#008000" strokeWidth="2.5">
        <path d="M22 870L685 1410 350 1543M685 1410L1200 1200M22 465L1080 1290M605 1402l160 16M942 1266l160 16" />
        <path d="M22 465L200 390M22 440l178-70M22 478l178-80M22 452l178-72" strokeWidth="2" />
        <circle cx="437" cy="1508" r="34" />
        <circle cx="55" cy="78" r="34" />
      </g>
      <path d="M22 1365L240 1543M65 1495l382-152M22 1127l108-43M970 1256l120-46M1018 1295l120-48M22 355l178-70M22 495l135-50" stroke="#3c8050" strokeWidth="2.5" />
      <path d="M22 243L155 350M22 1285l322-123M22 1043l38-16" stroke="#0f0" strokeWidth="4" />
      <path d="M140 993L680 780M1020 1275l330 268M1240 1205l328 262" stroke="#ffdf80" strokeWidth="3" />
      <path d="M22 482l195-77M200 410L1210 1235 1568 1095" stroke="#ff8080" strokeWidth="3" />
      <path d="M65 633l242 197 325-130M518 1000l222 180 326-132" stroke="#80a0ff" strokeWidth="5" />
      <path d="M22 22l166 130v30L22 45z" fill="#8020e8" />
      <path d="M22 92l166 130" stroke="#00a0ff" strokeWidth="2.5" />
      <path d="M22 55l166 130" stroke="#ff0" strokeWidth="3" />
      <path d="M188 120l-25-5-5 60" stroke="#0f0" strokeWidth="3" />
      <path d="M145 172l45-8-25 26z" fill="#0f0" />
      <path d="M105 265l50 38 33 10M150 298l38-6" stroke="#c86000" strokeWidth="3" />
    </g>

    <g transform={WEST}>
      <path d="M188 12h32v366l-32-20z" fill="#80007f" />
      {steps(20).map((i) => (
        <path key={i} d={`M188 ${30 + i * 17}h${i % 2 ? 12 : 18}`} stroke="#888" strokeWidth="2" />
      ))}
      <path d="M220 12h96v470L190 374l30 4z" fill="#878787" />
      <path d="M478 12h600v360L360 350V12z" fill="#777" />
      <path d="M360 12h118v288l-118 50z" fill="#4d0099" />
      <path d="M315 12h45v350h-45z" fill="#009999" />
      <path d="M332 12h23v360h-23z" fill="#0000b0" />
      <path d="M365 12h75l132 95v65z" fill="#00e8e8" />
      <path d="M365 12l-5 8 212 158v-16z" fill="#00b3b3" />
      <path d="M360 348l212-84" stroke="#ff0" strokeWidth="3" strokeDasharray="5 4" />
      <path d="M362 350l210-84v150z" fill="#000" />
      <BayWindow />
      <path d="M797 350V620l18-5v115l15 5 738-292V12H780z" fill="#999900" />
      <path d="M815 615l15-3v123l-15-5z" fill="#b8b800" />
      <path d="M700 12h520L1040 78 800 160z" fill="#009900" />
      <path d="M632 490h120v343l-120-92z" fill="#828282" />
      <path d="M752 490h45v225h-45z" fill="#009999" />
      <path d="M768 490h22v240h-22z" fill="#0000b0" />
      <path d="M955 500l111 83v-42l-60-45z" fill="#00e8e8" />
      <path d="M797 735l269-92v260z" fill="#000" />
      <BayWindow dx={434} dy={352} />

      {/* end column beside the wall */}
      <path d="M1310 1180l258-100v463h-258z" fill="#3a3a3a" />
      <path d="M1310 1180l30-12v375h-30z" fill="#474747" />
      <path d="M1340 525l228-85v640l-228 85z" fill="#000" />
      <path d="M1248 398l52-22 65 48 70-24 30 30v110l-140 60-77-50z" fill="#80506e" />
      <path d="M1217 465l75-25 48 40v685l-78 30V508z" fill="#6a2050" />
      <path d="M1217 465l75-25 25 25v90l-55-20v-27z" fill="#b8242c" />
      <path d="M1262 975l78-32v222l-78 30z" fill="#700018" />
      <path d="M1262 1100l78 50v15l-78 30z" fill="#4c0000" />
      <path d="M1340 525l126-48v633l-126 55z" fill="#2a0055" />
      <path d="M1310 1140l155-62v34l-125 53z" fill="#5a2d8c" />
      <path d="M1310 447h30v718l-30-20z" fill="#7a1040" fillOpacity=".6" />
      <path d="M1066 405l44-17 152 120-45 15z" fill="#adadad" />
      <path d="M1066 405l151 118v692l-151-120z" fill="#898989" />
      <path d="M1217 523l45-15v687l-45 20z" fill="#6c6c6c" />
      {steps(46).map((i) => (
        <path key={i} d={`M${i % 2 ? 1217 : 1230} ${545 + i * 14}h${i % 2 ? 45 : 28}`} stroke="#a02828" strokeWidth="2" />
      ))}
      {steps(20).map((i) => (
        <path key={i} d={`M1285 ${545 + i * 32}l55-20`} stroke="#b02030" strokeWidth="2" />
      ))}
      {steps(19).map((i) => (
        <path key={i} d={`M1340 ${550 + i * 32}l125-50M1375 ${560 + i * 32}l90-35`} stroke="#7040a8" strokeWidth="2" />
      ))}
      <path d="M1310 447h30v718l-30-20zM1340 475l125-45" fill="none" stroke="#b080ff" strokeWidth="4" />
      <path d="M1568 670l-100 40q30 30 20 75M1470 780q60-5 55 25-10 15-55 12" fill="none" stroke="#3c9050" strokeWidth="5" />
    </g>

    <g transform={EAST}>
      <path d="M0 1078l750-303v688l-205 80H0z" fill="#3a3a3a" />
      <path d="M0 1038l480-193 270-72v4L0 1080z" fill="#555" />
      <g fill="none">
        <path d="M30 1330L1543 725M265 1525L1543 1012M1000 670l543 440M0 1310l290 233M1225 855l-15 42M1225 855l20-45M30 1330l-15 48M30 1330l12-42M265 1525l15-45M1415 485l128 103" stroke="#008000" strokeWidth="2.5" />
        <circle cx="1510" cy="72" r="34" stroke="#008000" strokeWidth="2.5" />
        <circle cx="1478" cy="45" r="34" stroke="#008000" strokeWidth="2.5" />
        <circle cx="1510" cy="565" r="34" stroke="#008000" strokeWidth="2.5" />
        <circle cx="1510" cy="1085" r="34" stroke="#008000" strokeWidth="2.5" />
        <path d="M550 850l850 693M0 1473l90 70M1235 290l47-20" stroke="#ffdf80" strokeWidth="3" />
        <path d="M0 1095l870-352 180-75M1023 410l245-98-35-28" stroke="#ff8080" strokeWidth="3" />
        <path d="M1160 340l383 315M1543 725q-22 35 0 60" stroke="#ff80ff" strokeWidth="4" />
        <path d="M1215 320l200 165M1435 12l108 85M750 750l325-128" stroke="#f00" strokeWidth="3" />
        <path d="M1350 12l193 75M1270 12l20 20" stroke="#0f0" strokeWidth="3" />
        <path d="M0 600l375 302M85 290l95 60" stroke="#3c8050" strokeWidth="2.5" />
        <path d="M0 670l135-55" stroke="#3c9050" strokeWidth="5" />
        <path d="M135 615l60-22" stroke="#f00" strokeWidth="3" />
        <path d="M30 1070l250-25 432 350M890 717l153 3 222 182M1025 400l332 267M1025 570l190 150" stroke="#80a0ff" strokeWidth="5" />
        <path d="M1023 390l110-46M750 738l130-52M750 768l140-55" stroke="#00a0e8" strokeWidth="3" />
        <path d="M1023 365l90-35M1023 378l100-40M750 745l125-50M750 758l130-50M755 765l130-50" stroke="#ff0" strokeWidth="3" />
        <path d="M750 752l130-52" stroke="#f00" strokeWidth="3" />
        <path d="M768 710q30-20 45 8t-30 10zM813 718l40 40q30 5 60 8 20 6 42 32" stroke="#c86000" strokeWidth="3" />
        <path d="M752 500l118 50M752 545l118 10M752 575l118 5M752 600l118 5M752 620l118 8M752 655l118 3M752 680l118 8M752 705l118-5" stroke="#1030a0" strokeWidth="3" />
      </g>

      <path d="M0 12h78v393L0 437z" fill="#999900" />
      <path d="M112 12h68v95l-68 15z" fill="#999900" />
      <path d="M78 12h34v125l68 52v26l-90-66v250l-12 4z" fill="#5a1fa0" />
      <path d="M90 140l90 72v-22l-68-55z" fill="#8030d8" />
      <path d="M78 376l102-38v20L85 397z" fill="#6820c0" />
      <path d="M125 122l55 45M85 365l95-38" stroke="#00a0e8" strokeWidth="3" />

      <path d="M503 12h212v480l-212-80z" fill="#4d0099" />
      <path d="M412 12h91v130l-91-40z" fill="#009999" />
      <path d="M180 12h290l5 803-295-240z" fill="#999900" />
      <path d="M180 12l66 50v540l-66-27z" fill="#b3b300" />
      <path d="M246 12h27v310l-27 20z" fill="#8e7040" />
      <path d="M246 340l29-20h25l95 75v105l-149 60z" fill="#5c5c00" />
      <path d="M246 560l149-60 80 20v295L246 628z" fill="#5c5c00" />
      <path d="M246 550l149-58v22l-149 58z" fill="#a06868" />
      <path d="M390 185h24v312l-24 10z" fill="#8c6a58" />
      <path d="M190 12h125l155 130v128l-80-60L190 28z" fill="#00a000" />
      <path d="M246 60l80-32-12-16H190v16z" fill="#00b400" />
      <path d="M380 12h32v90l-32-26z" fill="#3a8060" />
      <path d="M414 225l58 46v230l-42 14-16-10z" fill="#3fae55" />
      <path d="M310 12h50l170 130-50 12-95-72z" fill="#7fd41a" />
      <path d="M597 130l125-60v680l-125 10z" fill="#999900" />
      <path d="M475 160l90-40 32 26v614l-122 50z" fill="#77505a" />
      <path d="M627 95l92-37v690l-92-5z" fill="#77505a" />
      <path d="M668 78l32-12v665l-32-10z" fill="#80604a" />
      <path d="M470 100l205-80 43 35v14l-48-30-170 70 20 32-50-22z" fill="#e6e600" />
      <path d="M503 150h42v125H503l-28-25v-90z" fill="#505f70" />
      <path d="M597 762l30-15v50l-30 12z" fill="#000" />
      <path d="M475 800l60-20 62-18v73l-87 35-35-20z" fill="#5a2d8c" />
      <path d="M475 796l122-40v45l-90 35-32-5z" fill="#2f0d60" />
      <path d="M627 745l38-12 35 22 50 18-92 34-31-12z" fill="#4b2580" />

      <path d="M716 12h154v578L750 496V86l-34-26z" fill="#878787" />
      <path d="M719 58l31 28v414l-31-25z" fill="#8468a4" />
      <path d="M719 475l31 25v275l-31-28z" fill="#2a0055" />
      <path d="M754 498l116 92" stroke="#ff0" strokeWidth="3" strokeDasharray="5 4" />
      <path d="M806 545l22 15v45l-22 5zM828 600l40-15" fill="#0000d8" stroke="#1a2a60" strokeWidth="3" />
      <path d="M870 12h35v698l-35-25z" fill="#5900b3" />
      <path d="M905 12h118v650l-118 48z" fill="#4d0099" />
      <path d="M870 12h50l-18 10z" fill="#7a00f0" />
      <path d="M1023 12h24v138l46 40v25l-70 35z" fill="#5c00b4" />
      <path d="M1047 12h60v185l-60-47z" fill="#00b3b3" />
      <path d="M1093 190l14 10v15l-14 5z" fill="#c00000" />
      <path d="M1107 12h20v478l-104 32v-14l84-30z" fill="#0000b8" />
      <path d="M1023 245l105-40v30l-105 38z" fill="#0000d0" />
      <path d="M1127 12h14v235h-14z" fill="#009999" />
      <path d="M1023 275l112-44 5 6v27l-117 44z" fill="#009c9c" />
      <path d="M1023 275l112-44 5 8-117 46z" fill="#00e8e8" />
      <path d="M1141 12h45v316l-45 18z" fill="#808080" />
      <path d="M1186 12h45v296l-45 20z" fill="#990000" />

      {/* horizontal bars */}
      {steps(40).map((i) => (
        <path key={i} d={`M0 ${400 + i * 16}L${i % 3 === 0 ? 655 : 475} ${Math.round(400 + i * 16 - (i % 3 === 0 ? 655 : 475) * 0.4)}`} stroke="#a89898" strokeWidth="2.500" strokeDasharray="14 3" />
      ))}
      {steps(21).map((i) => (
        <path key={i} d={`M475 ${215 + i * 30}l273-108`} stroke="#7a40b0" strokeWidth="2" />
      ))}
    </g>
    <g transform={WEST}>
      {steps(41).map((i) => (
        <path key={i} d={`M1468 ${440 + i * 16}l100-40`} stroke="#a89898" strokeWidth="2.5" />
      ))}
      <path d="M1310 447l258-102M1340 475l228-92M1340 1165l228-92M1468 1076l100-41" fill="none" stroke="#fff" strokeWidth="5" />
      <path d="M1478 135v1005M1507 308v755M1504 340v820M1530 990v553" stroke="#a39a9a" strokeWidth="3" />
      <path d="M1468 1095l100-40" stroke="#f00" strokeWidth="4" />
    </g>
    <g transform={EAST} fill="none">
      <path d="M0 1053l480-192" stroke="#f00" strokeWidth="3" />
      <path d="M0 345L720 58l30 27v688L0 1075M0 383L750 85M0 1035l480-190" stroke="#fff" strokeWidth="5" />
      <path d="M497 145l38 10v680l-20 15-18-22zM510 155v680M524 140v700M719 58v690l30 25" stroke="#b080ff" strokeWidth="4" />
      <path d="M10 420v270M32 430v950M53 110v1235M75 70v755M75 900v643M98 275v1235M121 200v1343M142 915v628M190 60v565M213 300v1005M235 35v1235M257 750v720M278 175v1260M303 130v1413M322 850v693M370 75v475M393 90v1240M415 130v1300M437 550v850M459 160v1203M485 150v1393" stroke="#a39a9a" strokeWidth="2.5" />
    </g>

    <g fill="none" stroke="#a0a0a0" strokeOpacity=".8">
      <circle cx="591" cy="283" r="252" />
      <circle cx="591" cy="31" r="15" />
      <circle cx="591" cy="535" r="15" />
      <circle cx="340" cy="283" r="15" />
      <circle cx="843" cy="286" r="15" />
    </g>

    {/* dimension and note texts lie on the floor plane */}
    <g fill="#e0e0e0" className="text-[22px] [font-family:'Noto_Sans','Noto_Sans_CJK_SC',sans-serif]">
      <text transform="translate(24 84) rotate(28)" fontStyle="italic" fontSize="20">K1</text>
      <text transform="translate(0 160) rotate(-35)">00</text>
      <text transform="translate(30 152) rotate(-30)">150</text>
      <text x="2" y="171" className="text-[15px]">1-10</text>
      <text transform="translate(37 183) rotate(38)">200</text>
      <text transform="translate(-8 206) rotate(34)">00高</text>
      <text transform="translate(77 277) rotate(35)">护窗栏杆900高</text>
      <text x="222" y="307" className="text-[15px]">6300</text>
      <text transform="translate(372 424) rotate(38)">200</text>
      <text transform="translate(432 470) rotate(38)">100</text>
      <text transform="translate(-6 474) rotate(38)">2000</text>
      <text transform="translate(82 546) rotate(38)">850</text>
      <text x="144" y="560" className="text-[15px]">1-13</text>
      <text transform="translate(170 166) rotate(38)">0</text>
      <text transform="translate(622 80) rotate(42)">1400</text>
      <text transform="translate(582 184) rotate(38)">1300</text>
      <text transform="translate(678 265) rotate(38)">2000</text>
      <text transform="translate(570 312) rotate(38)">主卧</text>
      <text transform="translate(617 362) rotate(37)" fill="#a8a8a8">标高9.130,距外墙边100mm</text>
      <text transform="translate(744 416) rotate(37)" fill="#a8a8a8">装饰线脚,仅4F有</text>
      <text transform="translate(958 285) rotate(25)">P</text>
      <text transform="translate(1000 154) rotate(37)">护窗栏杆900高</text>
      <text transform="translate(980 196) rotate(38)">置活动遮阳</text>
      <text transform="translate(976 250) rotate(38)">设置活动遮阳</text>
      <text transform="translate(1062 10) rotate(30)">高)</text>
      <text transform="translate(986 108) rotate(38)">00</text>
      <text x="1146" y="20" className="text-[16px]">1-D</text>
      <text x="1160" y="30" className="text-[16px]">1-D</text>
      <text x="1158" y="214" className="text-[16px]">1-C</text>
      <text x="1158" y="405" className="text-[16px]">1-B</text>
      <text transform="translate(1178 319) rotate(-90)" className="text-[16px]">1900</text>
    </g>
    <g fill="#e000e0" fontStyle="italic" className="text-[17px] [font-family:'Noto_Sans',sans-serif]">
      <text transform="translate(28 22) rotate(45)">LM1</text>
      <text transform="translate(128 238) rotate(30)">LC1</text>
      <text transform="translate(295 368) rotate(30)">LC1</text>
      <text transform="translate(890 306) rotate(-20)">LC6</text>
      <text transform="translate(978 172) rotate(-20)">C2</text>
    </g>

    {/* axis tripod */}
    <g strokeWidth="4" fontSize="13" className="[font-family:'Noto_Sans',sans-serif]">
      <path d="M54 517v-34" stroke="#0080ff" />
      <path d="M54 476l5 11H50z" fill="#0080ff" />
      <path d="M54 517l32-12" stroke="#0f0" />
      <path d="M96 501l-11-1 4 9z" fill="#0f0" />
      <path d="M54 517l20 15" stroke="#f00" />
      <path d="M83 539l-12-3 7-8z" fill="#f00" />
      <text x="45" y="476" fill="#0080ff" strokeWidth="0">Z</text>
      <text x="94" y="512" fill="#0f0" strokeWidth="0">Y</text>
      <text x="88" y="535" fill="#f00" strokeWidth="0">X</text>
    </g>

    <path transform={EAST} d="M188 918l42-7-5 16 335 158 416 212-432-186-331-171-8 17z" fill="#ff2010" />
  </svg>
);

const shown = ["剪力墙水平筋", "剪力墙垂直筋", "剪力墙插筋", "下层墙体纵筋的露出长度", "显示其它图元", "显示详细公式"];

const ControlPanel = () => (
  <section
    aria-label="钢筋显示控制面板"
    className="absolute left-[211px] top-[3px] h-[182px] w-[180px] rounded-[6px] border border-[#333] bg-gradient-to-r from-[#8f9aa5] via-[#c4d2e0] via-40% to-[#48b060] p-[6px] pt-0 shadow-[inset_0_0_0_1px_rgba(255,255,255,0.6)]"
  >
    <h3 className="h-[26px] leading-6 [font-family:'Noto_Sans','Noto_Sans_CJK_SC',sans-serif]">钢筋显示控制面板</h3>
    <div className="h-[148px] border-2 border-[#7d838c] bg-white pl-[3px] pt-px">
      {shown.map((s) => (
        <label key={s} className="flex h-3 items-center gap-[5px] whitespace-nowrap leading-3">
          <span className="relative flex">
            <input type="checkbox" defaultChecked className="size-[11px] appearance-none border border-[#8e8f8f] bg-[#e9edf5]" />
            <svg viewBox="0 0 11 11" className="pointer-events-none absolute inset-0 size-[11px]" aria-hidden="true">
              <path d="M3 5l2 3 3.5-6" fill="none" stroke="#32509c" strokeWidth="1.6" />
            </svg>
          </span>
          {s}
        </label>
      ))}
    </div>
  </section>
);

/* ---------- bar schedule ---------- */

const Spin = ({ id, value, className }: { id: string; value: string; className: string }) => (
  <span className={clsx("flex h-[23px] shrink-0 items-center border border-[#6a6a6a] bg-[#f6f6f6]", className)}>
    <input id={id} defaultValue={value} className="min-w-0 flex-1 bg-transparent pr-1 text-right text-[#808080] outline-none" />
    <svg viewBox="0 0 10 22" className="mr-[2px] h-[22px] w-[10px]" aria-hidden="true">
      <path d="M2 7h6L5 4zM2 15h6l-3 3z" fill="#444" />
    </svg>
  </span>
);

type Bar = {
  no: string;
  name: string;
  hrb: boolean;
  shape: string;
  size: string;
  formula: string;
  desc: string;
  rest: string[];
  h: string;
};

const bars: Bar[] = [
  { no: "1*", name: "墙身水平钢筋.1", hrb: true, shape: "18", size: "4547", formula: "4330-15+260+29*d", desc: "净长-保护层+设定弯折+锚固", rest: ["18", "4789", "15", "0", "0", "1.892", "28.375", "直筋"], h: "h-[34px]" },
  { no: "2", name: "墙身水平钢筋.2", hrb: true, shape: "18", size: "4043", formula: "3780-15+260+1.2*29*d", desc: "净长-保护层+设定弯折+锚固", rest: ["18", "4285", "15", "0", "0", "1.693", "25.389", "直筋"], h: "h-[34px]" },
  { no: "3", name: "墙身垂直钢筋.1", hrb: true, shape: "1", size: "3178", formula: "2900+1.2*29*8", desc: "墙实际高度+搭接", rest: ["(0)", "3178", "20", "0", "0", "1.255", "25.106", "直筋"], h: "h-[29px]" },
  { no: "4", name: "墙身插筋.1", hrb: true, shape: "1", size: "578", formula: "300+1.2*29*d", desc: "搭接+插筋锚固长度", rest: ["(0)", "578", "1", "0", "0", "0.228", "0.228", "直筋"], h: "h-[29px]" },
  { no: "5", name: "墙身插筋.2", hrb: true, shape: "1", size: "1356", formula: "300+500+1.2*29*d+1.2*29*d", desc: "搭接+错开长度+搭接+插筋锚固长度", rest: ["(0)", "1356", "1", "0", "0", "0.536", "0.536", "直筋"], h: "h-[29px]" },
  { no: "6", name: "墙身拉筋.1", hrb: false, shape: "485", size: "170", formula: "(200-2*15)+2*(5*d+1.9*d)", desc: "", rest: ["(0)", "253", "52", "0", "0", "0.056", "2.921", "箍筋"], h: "h-[29px]" },
];

const BarShape = ({ bar }: { bar: Bar }) => {
  if (bar.shape === "18")
    return (
      <svg viewBox="0 0 200 32" className="block h-8 w-[200px]">
        <text x="10" y="20" fontSize="12">260</text>
        <text x="85" y="15" fontSize="12" fill="#f00">{bar.size}</text>
        <path d="M34 8v14h138" fill="none" stroke="#000" strokeWidth="2" />
      </svg>
    );
  if (bar.shape === "485")
    return (
      <svg viewBox="0 0 200 27" className="block h-[27px] w-[200px]">
        <path d="M50 24L39 12q-3-6 2-7h126q3 2 0 7l-12 12" fill="none" stroke="#000" strokeWidth="2" />
        <text x="90" y="18" fontSize="12">{bar.size}</text>
      </svg>
    );
  return (
    <svg viewBox="0 0 200 27" className="block h-[27px] w-[200px]">
      <text x="90" y="15" fontSize="12" fill="#f00">{bar.size}</text>
      <path d="M24 18h149" stroke="#000" strokeWidth="2" />
    </svg>
  );
};

const barCols: [string, string][] = [
  ["", "w-[32px]"], ["筋号", "w-[73px]"], ["级别", "w-[36px]"], ["图号", "w-[33px]"], ["图形", "w-[201px]"], ["计算公式", ""],
  ["公式描述", "w-[156px]"], ["弯曲调整(mm)", "w-[81px]"], ["长度(mm)", "w-[61px]"], ["根数", "w-[38px]"], ["搭接", "w-[39px]"],
  ["损耗(%)", "w-[49px]"], ["单重(kg)", "w-[61px]"], ["总重(kg)", "w-[61px]"], ["钢筋归类", "w-[64px]"],
];

const cell = "border border-[#b8c0b8] p-0 pl-[2px] leading-3";

const BarTable = () => (
  <div className="flex h-[227px] shrink-0">
    <div className="mr-1 w-2 shrink-0 bg-[radial-gradient(circle,#b8b8b8_1px,transparent_1px)] bg-[length:4px_5px]" />
    <div className="flex min-w-0 flex-1 flex-col border border-[#9a9a9a] bg-white">
      <div className="flex min-h-0 flex-1">
        <div className="min-w-0 flex-1 overflow-hidden pl-px">
          <table className="w-full table-fixed border-collapse">
            <colgroup>
              {barCols.map(([name, w]) => (
                <col key={name} className={w} />
              ))}
            </colgroup>
            <thead>
              <tr className="h-5 whitespace-nowrap leading-4">
                {barCols.map(([name]) => (
                  <th key={name} className={name === "公式描述" ? headHot : headCell}>{name}</th>
                ))}
              </tr>
            </thead>
            <tbody className="bg-[#ccffd9]">
              {bars.map((b, i) => (
                <tr key={b.no} className={b.h}>
                  <td className={clsx("border border-[#c0c0c0] p-0 text-center", i === 0 ? "bg-[#fbd08a] text-[#5c0058]" : "bg-[#f6f6f6]")}>{b.no}</td>
                  <td className={cell}>{b.name}</td>
                  <td className="border border-l-2 border-[#b8c0b8] border-l-black p-0 text-center">
                    <Grade hrb={b.hrb} />
                  </td>
                  <td className={cell}>{b.shape}</td>
                  <td className="border border-[#b8c0b8] p-0">
                    <BarShape bar={b} />
                  </td>
                  <td className={cell}>{b.formula}</td>
                  <td className={clsx(cell, i === 0 && "bg-[#b5eedd]", b.desc.length < 15 && "whitespace-nowrap")}>{b.desc}</td>
                  {b.rest.map((v, j) => (
                    <td key={j} className={cell}>{v}</td>
                  ))}
                </tr>
              ))}
            </tbody>
          </table>
        </div>
        <VBar thumb="mt-[5px] h-[60%]" />
      </div>
      <div className="pr-4">
        <HBar thumb="ml-[10%] w-[61%]" />
      </div>
    </div>
  </div>
);

const NavArrows = () => (
  <div className="flex h-[28px] shrink-0 items-center">
    <button type="button" aria-label="关闭" className="mb-2 mr-3">
      <svg viewBox="0 0 10 10" className="size-[10px]">
        <path d="M.5.5h9v9h-9z" fill="#eee" stroke="#a33" />
        <path d="M2 2l6 6M8 2L2 8" stroke="#222" strokeWidth="1.5" />
      </svg>
    </button>
    {[
      ["首条", "M3 3v10M5 8l6-5v10z", "#c4c4c4"],
      ["上一条", "M5 8l5-5v10z", "#c4c4c4"],
      ["下一条", "M11 8L6 3v10z", "#1f62d8"],
      ["末条", "M12 3v10M11 8L5 3v10z", "#1f62d8"],
    ].map(([label, d, c]) => (
      <button key={label} type="button" aria-label={label} className="flex w-6 items-center justify-start">
        <svg viewBox="0 0 16 16" className="-ml-2 size-4">
          <path d={d} fill={c} stroke={c} strokeWidth="1.2" />
        </svg>
      </button>
    ))}
  </div>
);

/* ---------- property editor ---------- */

type Prop = { n: number; name: string; value?: ReactNode; kind?: "sel" | "blue" | "open" | "closed" | "child" };

const rebar = (pre: string, hrb: boolean, post: string) => (
  <>
    {pre}
    <Grade hrb={hrb} />
    {post}
  </>
);

const props: Prop[] = [
  { n: 1, name: "名称", value: "Q1", kind: "sel" },
  { n: 2, name: "厚度(mm)", value: "200" },
  { n: 3, name: "轴线距左墙皮距离", value: "0" },
  { n: 4, name: "水平分布钢筋", value: rebar("(2)", true, "8@200"), kind: "blue" },
  { n: 5, name: "垂直分布钢筋", value: rebar("(2)", true, "8@200"), kind: "blue" },
  { n: 6, name: "拉筋", value: rebar("", false, "6@600*600"), kind: "blue" },
  { n: 7, name: "备注" },
  { n: 8, name: "其它属性", kind: "open" },
  { n: 9, name: "其它钢筋", kind: "child" },
  { n: 10, name: "汇总信息", value: "剪力墙", kind: "child" },
  { n: 11, name: "保护层厚度(mm)", value: "(15)", kind: "child" },
  { n: 12, name: "压墙筋", kind: "child" },
  { n: 13, name: "纵筋构造", value: "设置插筋", kind: "child" },
  { n: 14, name: "插筋信息", kind: "child" },
  { n: 15, name: "水平钢筋拐角增", value: "否", kind: "child" },
  { n: 16, name: "计算设置", value: "按默认计算设置计算", kind: "child" },
  { n: 17, name: "节点设置", value: "按设定节点设置计算", kind: "child" },
  { n: 18, name: "搭接设置", value: "按默认搭接设置计算", kind: "child" },
  { n: 19, name: "起点顶标高(m)", value: "层顶标高(17.34)", kind: "child" },
  { n: 20, name: "终点顶标高(m)", value: "层顶标高(17.34)", kind: "child" },
  { n: 21, name: "起点底标高(m)", value: "层底标高(14.44)", kind: "child" },
  { n: 22, name: "终点底标高(m)", value: "层底标高(14.44)", kind: "child" },
  { n: 23, name: "锚固搭接", kind: "closed" },
  { n: 38, name: "显示样式", kind: "closed" },
];

const PropertyEditor = () => (
  <aside className="ml-[3px] mr-px flex w-[345px] shrink-0 flex-col">
    <DockTitle title="属性编辑器" />
    <div className="relative mt-px flex-1 border border-[#9a9da3] bg-white p-px">
      <table className="w-[341px] table-fixed border-collapse">
        <colgroup>
          <col className="w-[21px]" />
          <col className="w-[121px]" />
          <col />
        </colgroup>
        <thead>
          <tr className="h-[22px]">
            <th className={headCell} aria-label="序号" />
            <th className={headCell}>属性名称</th>
            <th className={headHot}>属性值</th>
          </tr>
        </thead>
        <tbody>
          {props.map(({ n, name, value, kind }) => (
            <tr key={n} className="h-[19px] whitespace-nowrap leading-4">
              <td className={clsx("border border-[#c0c0c0] p-0 text-center", kind === "sel" ? "bg-[#fbd08a] text-[#5c0058]" : "bg-[#f6f6f6]")}>{n}</td>
              <td
                className={clsx(
                  "overflow-hidden border border-[#c0c0c0] p-0",
                  kind === "sel" && "bg-[#3399ff] text-white",
                  kind === "blue" && "text-[#0000ff]",
                  (kind === "open" || kind === "closed") && "text-[#8a8a8a]"
                )}
              >
                {kind === "child" ? (
                  <span className="flex h-[18px] items-center">
                    <span className={clsx("ml-2 border-l border-[#c0c0c0]", n === 22 ? "mb-[9px] h-[9px]" : "h-[18px]")} />
                    <span className="mr-1 w-4 border-t border-[#c0c0c0]" />
                    {name}
                  </span>
                ) : kind === "open" || kind === "closed" ? (
                  <span className="flex items-center gap-[5px] pl-[2px]">
                    <PlusMinus plus={kind === "closed"} />
                    {name}
                  </span>
                ) : (
                  <span className="pl-[19px]">{name}</span>
                )}
              </td>
              <td className={clsx("border border-[#c0c0c0] p-0 pl-[2px] text-[#808080]", kind === "sel" && "bg-[#dfefff]")}>{value}</td>
            </tr>
          ))}
        </tbody>
      </table>
      <div className="absolute right-0 top-[386px] h-[57px] w-[7px] rounded-full bg-[#555] pt-4">
        <div className="h-10 rounded-b-full bg-[repeating-linear-gradient(to_bottom,#26d968_0_2px,#178a44_2px_3px)]" />
      </div>
      <p className="mt-[67px] w-[310px] pl-[3px] text-[21px] leading-7 text-[#ff2010] [font-family:'Noto_Sans','Noto_Sans_CJK_SC',sans-serif]">
        剪力墙的纵筋上下不连接，什么原因导致的呢
      </p>
    </div>
  </aside>
);

/* ---------- input method badge ---------- */

const ImeBadge = () => (
  <div className="absolute bottom-0 right-[221px] flex h-[52px] w-[81px] items-end">
    <span className="absolute bottom-[2px] right-0 h-7 w-[60px] rounded-r-full border border-[#1787f0] bg-white pr-[11px] text-right text-[12px] font-bold leading-[26px] text-[#1787f0]">英</span>
    <svg viewBox="0 0 52 52" className="absolute left-0 top-0 size-[52px]" aria-hidden="true">
      <circle cx="26" cy="26" r="24" fill="#e8ebf0" stroke="#2088f0" strokeWidth="2" />
      <path d="M9 34C7 20 14 11 26 11s19 9 17 23z" fill="#c9ced8" />
      <path d="M8 34q18 6 36 0l-1 7q-17 5-34 0zM15 40h7v9l-6-3z" fill="#a9b0bd" />
      <ellipse cx="22" cy="21" rx="4" ry="5" fill="#fff" />
      <ellipse cx="31" cy="21" rx="4" ry="5" fill="#fff" />
      <circle cx="23" cy="22" r="1.8" fill="#667" />
      <path d="M29 22q2-2 4 0" fill="none" stroke="#667" />
      <ellipse cx="26" cy="30" rx="11" ry="3" fill="#fff" />
    </svg>
  </div>
);

export default function App() {
  return (
    <div className="relative flex h-screen flex-col overflow-hidden bg-[#f0f0f0] text-[12px] text-black [font-family:'Liberation_Serif','Noto_Sans_CJK_SC',sans-serif]">
      <div className="h-[2px] shrink-0 border-b border-[#1c2f45] bg-[#9fb6c9]" />

      <header className="shrink-0 [font-family:'Noto_Sans','Noto_Sans_CJK_SC',sans-serif]">
        <nav className="flex h-[28px] items-center pl-[7px]">
          {menus.map((m) => (
            <button key={m} type="button" className="mr-[11px] whitespace-nowrap">
              {m}
            </button>
          ))}
          <Tool icon="newchange" label="新建变更" caret />
          <div className="ml-auto flex h-full items-center bg-gradient-to-b from-[#fcfcfc] to-[#f2f2f2] pr-[3px]">
            <Tool icon="user" label="13414989758" caret />
            <Tool icon="bell" />
            <Tool icon="chat" label="我要建议" />
          </div>
        </nav>
        <div className="flex h-[30px] items-start">
          <Strip>
            <Tool icon="page" />
            <Tool icon="open" caret />
            <Tool icon="save" />
            <Sep />
            <Tool icon="undo" caret off />
            <Tool icon="redo" caret off />
          </Strip>
          <Strip>
            <Tools items={mainTools} />
          </Strip>
          <Strip>
            <Tools items={viewTools} />
          </Strip>
        </div>
      </header>

      <div className="flex min-h-0 flex-1">
        <ModuleNav />
        <ListColumn />

        <main className="ml-[2px] flex min-w-0 flex-1 flex-col">
          <div className="shrink-0 [font-family:'Noto_Sans','Noto_Sans_CJK_SC',sans-serif]">
            <div className="flex h-[28px]">
              <Strip>
                <Grip />
                <Tools items={editTools} />
              </Strip>
            </div>
            <div className="flex h-[28px]">
              <Strip>
                <Grip />
                <Combo name="楼层" value="第6层" className="w-[59px]" />
                <Combo name="构件类型" value="墙" className="w-[70px]" />
                <Combo name="构件" value="剪力墙" className="w-[69px]" />
                <Combo name="名称" value="Q1" className="w-[69px]" />
                <Sep />
                <Tools items={compTools} />
              </Strip>
              <Strip>
                <Grip />
                <Tools items={axisTools} />
              </Strip>
            </div>
            <div className="flex h-[28px]">
              <Strip>
                <Grip />
                <Tools items={drawTools} />
                <Combo name="绘制方式" value="" className="w-[56px]" />
                <Tools items={drawTools2} />
              </Strip>
              <Strip>
                <Grip />
                <span className="w-5" />
              </Strip>
            </div>
          </div>

          <div className="relative min-h-0 flex-1 overflow-hidden bg-black">
            <Model />
            <ControlPanel />
          </div>

          <div className="flex h-[32px] shrink-0 items-center [font-family:'Noto_Sans','Noto_Sans_CJK_SC',sans-serif]">
            <Strip>
              <Grip />
              <Tool icon="ortho" label="正交" />
              <Tool icon="snap" label="对象捕捉" active />
              <Tool icon="dynin" label="动态输入" active />
            </Strip>
            <Strip>
              <Grip />
              <Tool icon="cross" label="交点" />
              <Tool icon="perp" label="垂点" active />
              <Tool icon="mid" label="中点" active />
              <Tool icon="vertex" label="顶点" />
              <Tool icon="coord" label="坐标" />
            </Strip>
            <Strip>
              <Grip />
              <Combo name="偏移方式" value="不偏移" className="w-[58px]" />
              <Sep />
              <label htmlFor="off-x" className="mr-[3px] text-[#808080]">X=</label>
              <Spin id="off-x" value="0" className="w-[57px]" />
              <span className="mx-[3px] text-[#808080]">mm</span>
              <label htmlFor="off-y" className="mr-[3px] text-[#808080]">Y=</label>
              <Spin id="off-y" value="0" className="w-[57px]" />
              <span className="ml-[3px] text-[#808080]">mm</span>
              <Sep />
              <input id="rot-on" type="checkbox" className="size-3 appearance-none border border-[#aaa] bg-white" />
              <label htmlFor="rot-on" className="mx-[6px]">旋转</label>
              <Spin id="rot" value="0.000" className="w-[67px]" />
              <label htmlFor="rot" className="ml-1 text-[#808080]">°</label>
            </Strip>
          </div>
          <NavArrows />
          <BarTable />
        </main>

        <PropertyEditor />
      </div>

      <footer className="flex h-[23px] shrink-0 gap-[3px] border-b-2 border-[#1f3550] pt-[2px]">
        {[
          ["X=95175 Y=150184", "w-[147px]"],
          ["层高:2.9m", "w-[77px]"],
          ["底标高:14.44m", "w-[97px]"],
          ["1(55)", "w-[47px]"],
          ["", "flex-1"],
          ["80.5 FPS", "w-[69px]"],
        ].map(([text, w]) => (
          <span key={w} className={clsx("border border-[#d0d0d0] bg-[#f6f6f6] pl-px leading-[17px]", w)}>
            {text}
          </span>
        ))}
      </footer>
      <ImeBadge />
    </div>
  );
}
